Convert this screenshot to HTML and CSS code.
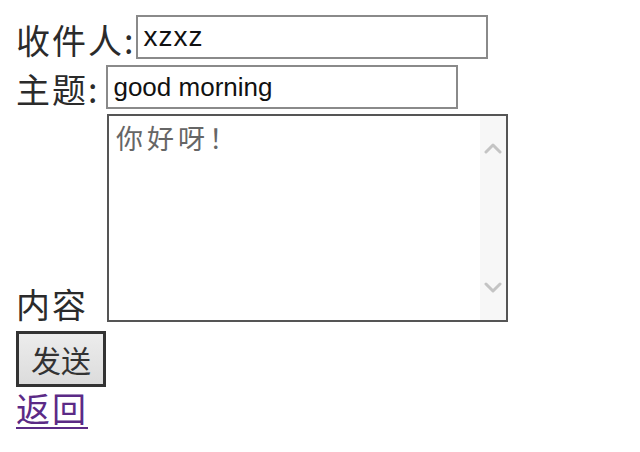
FILE: index.html
```html
<!DOCTYPE html>
<html lang="zh-CN">
<head>
<meta charset="utf-8">
<title>写信</title>
<link rel="stylesheet" href="styles.css">
</head>
<body>
<form class="mail-form">
  <div class="row row-to">
    <label class="lbl" for="to">收件人:</label>
    <input class="field field-to" id="to" type="text" value="xzxz">
  </div>
  <div class="row row-subject">
    <label class="lbl lbl-subject" for="subject">主题:</label>
    <input class="field field-subject" id="subject" type="text" value="good morning">
  </div>
  <div class="row row-content">
    <label class="lbl lbl-content" for="content">内容</label>
    <div class="area-wrap">
      <textarea class="area" id="content">你好呀！</textarea>
      <div class="fake-scroll">
        <svg class="chev" width="18" height="12" viewBox="0 0 18 12"><path d="M2 10 L9 3 L16 10" fill="none" stroke="#c4c4c4" stroke-width="3" stroke-linecap="round" stroke-linejoin="round"/></svg>
        <svg class="chev" width="18" height="12" viewBox="0 0 18 12"><path d="M2 2 L9 9 L16 2" fill="none" stroke="#c4c4c4" stroke-width="3" stroke-linecap="round" stroke-linejoin="round"/></svg>
      </div>
    </div>
  </div>
  <div class="row row-btn">
    <button class="send" type="button">发送</button>
  </div>
  <div class="row row-link">
    <a class="back" href="#">返回</a>
  </div>
</form>
</body>
</html>
```
FILE: styles.css
```css
html, body {
  margin: 0;
  padding: 0;
  background: #ffffff;
}
body {
  padding: 15px 16px;
  font-family: "Noto Sans CJK SC", "Liberation Sans", sans-serif;
  color: #2b2b2b;
}
.mail-form {
  display: flex;
  flex-direction: column;
  align-items: flex-start;
}
.row {
  display: flex;
  align-items: center;
  height: 44px;
}
.lbl {
  font-size: 34px;
  line-height: 40px;
  padding-top: 6px;
  letter-spacing: 2px;
}
.lbl-subject {
  padding-top: 4px;
}
.field {
  box-sizing: border-box;
  height: 44px;
  border: 2px solid #8a8a8a;
  padding: 0 5px;
  font-family: "Liberation Sans", sans-serif;
  font-size: 26px;
  color: #111;
  background: #fff;
  outline: none;
}
.field-to {
  width: 352px;
  margin-left: 1px;
  font-size: 28px;
  letter-spacing: 1px;
}
.row-subject {
  margin-top: 6px;
}
.field-subject {
  width: 352px;
  margin-left: 7px;
}
.row-content {
  height: auto;
  margin-top: 5px;
  align-items: flex-end;
}
.lbl-content {
  line-height: 36px;
  padding: 0;
  width: 91px;
}
.area-wrap {
  position: relative;
  width: 401px;
  height: 208px;
}
.area {
  box-sizing: border-box;
  display: block;
  width: 401px;
  height: 208px;
  margin: 0;
  border: 2px solid #555;
  padding: 5px 7px;
  resize: none;
  overflow: hidden;
  font-family: "Noto Sans CJK SC", sans-serif;
  font-size: 27px;
  line-height: 34px;
  letter-spacing: 4px;
  color: #666;
  background: #fff;
  outline: none;
}
.fake-scroll {
  position: absolute;
  top: 2px;
  right: 2px;
  bottom: 2px;
  width: 26px;
  background: #f7f7f7;
  display: flex;
  flex-direction: column;
  align-items: center;
  justify-content: space-between;
  padding: 26px 0 26px;
  box-sizing: border-box;
}
.chev {
  display: block;
}
.row-btn {
  height: auto;
  margin-top: 9px;
}
.send {
  box-sizing: border-box;
  width: 90px;
  height: 56px;
  border: 3px solid #333;
  background: linear-gradient(#ececec, #dcdcdc);
  font-family: "Noto Sans CJK SC", sans-serif;
  font-size: 30px;
  color: #333;
  padding: 0;
  margin: 0;
}
.row-link {
  height: auto;
  margin-top: 1px;
}
.back {
  font-size: 34px;
  line-height: 40px;
  color: #5b2a86;
  text-decoration: underline;
  text-decoration-thickness: 2px;
  text-underline-offset: 5px;
  letter-spacing: 2px;
}
```
